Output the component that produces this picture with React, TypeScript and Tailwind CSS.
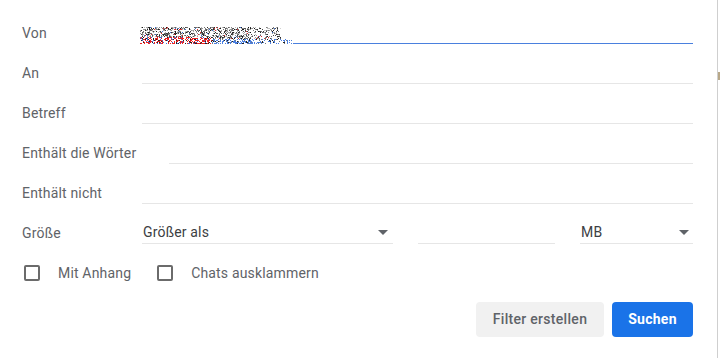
import React from "react";

function makeNoise() {
  let s = 98765;
  const rnd = () => {
    s = (s * 1103515245 + 12345) & 0x7fffffff;
    return s / 0x7fffffff;
  };
  const rects: { x: number; y: number; c: string }[] = [];
  const W = 153;
  const H = 17;
  for (let y = 0; y < H; y++) {
    for (let x = 0; x < W; x++) {
      const r = rnd();
      const redZone = x < 72 && y >= 10;
      const blueZone = x >= 30 && y >= 12;
      if (redZone) {
        if (r < 0.55) {
          const k = rnd();
          rects.push({ x, y, c: k < 0.6 ? "#ee2020" : k < 0.8 ? "#3b6fd8" : "#222" });
        }
      } else if (blueZone) {
        const p = x < 120 ? 0.5 : 0.32;
        if (r < p) {
          const k = rnd();
          rects.push({ x, y, c: k < 0.7 ? "#4a7fe0" : k < 0.85 ? "#777" : "#222" });
        }
      } else if (y < 14) {
        if (x > 140) continue;
        const p = x < 110 ? 0.5 : 0.32;
        if (r < p) {
          const g = Math.floor(20 + rnd() * 190);
          const k = rnd();
          const col = k < 0.05 ? "#e03030" : k < 0.1 ? "#4070d0" : `rgb(${g},${g},${g})`;
          rects.push({ x, y, c: col });
        }
      }
    }
  }
  return rects;
}

const noise = makeNoise();

function Arrow() {
  return (
    <svg width="10" height="5" viewBox="0 0 10 5" className="shrink-0">
      <path d="M0 0 L10 0 L5 5 Z" fill="#5f6368" />
    </svg>
  );
}

function Row({ label, labelW = "w-[120px]", children }: { label: string; labelW?: string; children?: React.ReactNode }) {
  return (
    <div className="flex h-10 items-center">
      <div className={`${labelW} shrink-0 text-[14px] tracking-[0.17px] text-[#5f6368]`}>{label}</div>
      {children}
    </div>
  );
}

function Field() {
  return <div className="h-[22px] flex-1 border-b border-[#e6e6e6]" />;
}

function Checkbox({ label }: { label: string }) {
  return (
    <div className="flex items-center">
      <div className="ml-[2px] h-4 w-4 rounded-[2px] border-2 border-[#6b6b6b]" />
      <span className="ml-[18px] text-[14px] tracking-[0.17px] text-[#5f6368]">{label}</span>
    </div>
  );
}

export default function App() {
  return (
    <div className="relative flex h-[358px] w-[720px] bg-white" style={{ fontFamily: "Roboto, 'Noto Sans', sans-serif" }}>
      <div className="flex h-full w-[718px] flex-col border-r border-[#cfcfcf] pl-[22px] pr-[24px] pt-[13px]">
        <Row label="Von">
          <div className="relative h-[22px] flex-1 border-b border-[#4a80de]">
            <svg width="153" height="17" viewBox="0 0 153 17" className="absolute bottom-[-1px] left-[-2px]" shapeRendering="crispEdges">
              <rect x="0" y="0" width="153" height="17" fill="#ffffff" />
              {noise.map((r, i) => (
                <rect key={i} x={r.x} y={r.y} width="1" height="1" fill={r.c} />
              ))}
            </svg>
          </div>
        </Row>
        <Row label="An">
          <Field />
        </Row>
        <Row label="Betreff">
          <Field />
        </Row>
        <Row label="Enthält die Wörter" labelW="w-[147px]">
          <Field />
        </Row>
        <Row label="Enthält nicht">
          <Field />
        </Row>
        <Row label="Größe">
          <div className="flex h-[22px] w-[251px] shrink-0 items-center justify-between border-b border-[#e6e6e6] pl-[1px] pr-[5px]">
            <span className="text-[14px] tracking-[0.17px] text-[#3c4043]">Größer als</span>
            <Arrow />
          </div>
          <div className="ml-[25px] h-[22px] w-[137px] shrink-0 border-b border-[#e6e6e6]" />
          <div className="ml-[25px] flex h-[22px] flex-1 items-center justify-between border-b border-[#e6e6e6] pl-[1px] pr-[4px]">
            <span className="text-[14px] tracking-[0.17px] text-[#3c4043]">MB</span>
            <Arrow />
          </div>
        </Row>
        <div className="flex h-10 items-center gap-[24px]">
          <Checkbox label="Mit Anhang" />
          <Checkbox label="Chats ausklammern" />
        </div>
        <div className="mt-[9px] flex justify-end gap-[8px]">
          <button className="h-[35px] w-[128px] rounded-[4px] bg-[#f1f1f1] text-[14px] font-medium tracking-[0.3px] text-[#5f6368]">
            Filter erstellen
          </button>
          <button className="h-[35px] w-[81px] rounded-[4px] bg-[#1a73e8] text-[14px] font-bold tracking-[0.25px] text-white">
            Suchen
          </button>
        </div>
      </div>
      <div className="absolute left-[718px] top-[72px] h-[8px] w-[2px] bg-[#b8a888]" />
    </div>
  );
}
